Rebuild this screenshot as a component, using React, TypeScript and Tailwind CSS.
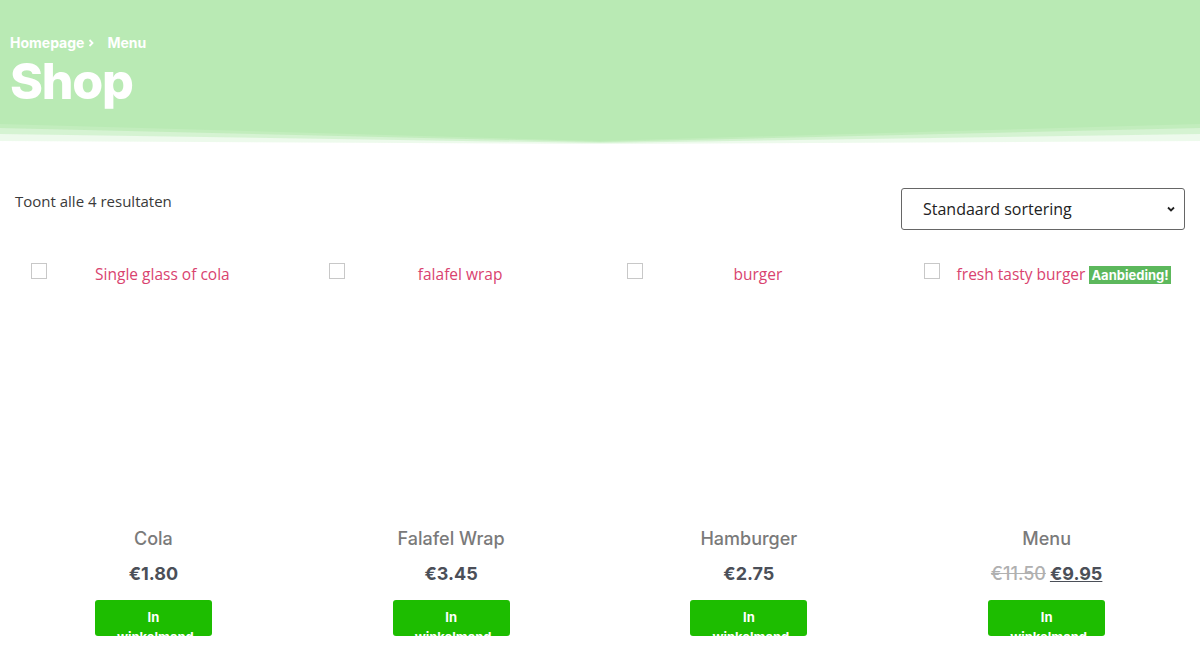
import React from 'react';

interface Product {
  alt: string;
  name: string;
  price: string;
  oldPrice?: string;
  sale?: boolean;
}

const products: Product[] = [
  { alt: 'Single glass of cola', name: 'Cola', price: '€1.80' },
  { alt: 'falafel wrap', name: 'Falafel Wrap', price: '€3.45' },
  { alt: 'burger', name: 'Hamburger', price: '€2.75' },
  { alt: 'fresh tasty burger', name: 'Menu', price: '€9.95', oldPrice: '€11.50', sale: true },
];

const heading = { fontFamily: 'Inter, "Noto Sans", sans-serif' };
const body = { fontFamily: '"Open Sans", "Noto Sans", sans-serif' };

const ProductCard: React.FC<{ p: Product }> = ({ p }) => (
  <div className="flex flex-col items-center">
    {/* broken product image with alt text */}
    <div className="relative w-full h-[266px]">
      <span className="absolute left-[16px] top-[4px] w-[16px] h-[16px] border border-[#c8c8c8] bg-white" />
      <div
        className={`${p.sale ? 'pl-[34px]' : 'pl-[18px]'} pt-[3px] text-center text-[15.5px] leading-[24px] text-[#d9436f]`}
        style={body}
      >
        {p.alt}
        {p.sale && (
          <span
            className="ml-1 px-[2px] bg-[#5cb85c] text-white text-[13px] font-bold leading-[18px] inline-block"
            style={heading}
          >
            Aanbieding!
          </span>
        )}
      </div>
    </div>
    <h2 className="text-[18px] leading-[28px] text-[#7a7a7a] font-medium" style={heading}>
      {p.name}
    </h2>
    <div className="mt-[7px] text-[18px] leading-[28px] font-bold text-[#4b4f58]" style={heading}>
      {p.oldPrice && (
        <span className="line-through text-[#b0b0b0] font-medium mr-1">{p.oldPrice}</span>
      )}
      <span className={p.sale ? 'underline' : ''}>{p.price}</span>
    </div>
    {/* the theme clips the wrapped label inside a fixed-height button */}
    <button
      className="mt-[12px] w-[117px] h-[36px] overflow-hidden rounded-[3px] bg-[#1dbd00] text-white text-[13px] font-bold leading-[20px] pt-[7px] px-[22px]"
      style={heading}
    >
      In winkelmand
    </button>
  </div>
);

export default function App() {
  return (
    <div className="w-[1200px] h-[664px] overflow-hidden bg-white">
      {/* hero */}
      <div className="bg-[#b9eab4] h-[124px] px-[10px] pt-[35px]" style={heading}>
        <div className="flex items-center text-[14px] font-bold text-white leading-[16px]">
          <span>Homepage</span>
          <svg className="w-[8px] h-[8px] ml-[3px]" viewBox="0 0 8 8" fill="none">
            <path d="M2.5 1 L5.5 4 L2.5 7" stroke="white" strokeWidth="1.8" />
          </svg>
          <span className="ml-[12px]">Menu</span>
        </div>
        <h1 className="text-[50px] font-extrabold text-white leading-[58px] tracking-tight mt-[1px]">Shop</h1>
      </div>
      <svg className="block w-[1200px] h-[20px]" viewBox="0 0 1200 20" preserveAspectRatio="none">
        <path d="M0 0 L0 17 L600 20 L1200 17 L1200 0 Z" fill="#b9eab4" opacity="0.25" />
        <path d="M0 0 L0 10 L600 19 L1200 10 L1200 0 Z" fill="#b9eab4" opacity="0.45" />
        <path d="M0 0 L0 4 L600 18 L1200 4 L1200 0 Z" fill="#b9eab4" opacity="0.7" />
        <path d="M0 0 L600 17 L1200 0 Z" fill="#b9eab4" />
      </svg>

      <div className="px-[15px] pt-[44px]">
        {/* toolbar */}
        <div className="flex items-start justify-between">
          <p className="text-[15px] leading-[28px] text-[#3a3a3a] mt-[-1px]" style={body}>
            Toont alle 4 resultaten
          </p>
          <div
            className="w-[284px] h-[42px] border border-[#666] rounded-[3px] flex items-center justify-between pl-[21px] pr-[8px] text-[16px] text-[#222]"
            style={body}
          >
            <span>Standaard sortering</span>
            <svg className="w-[10px] h-[10px]" viewBox="0 0 10 10" fill="none">
              <path d="M2 3.5 L5 6.5 L8 3.5" stroke="#222" strokeWidth="1.8" />
            </svg>
          </div>
        </div>

        {/* products */}
        <div className="grid grid-cols-4 gap-x-[21px] mt-[29px]">
          {products.map((p) => (
            <ProductCard key={p.name} p={p} />
          ))}
        </div>
      </div>
    </div>
  );
}
